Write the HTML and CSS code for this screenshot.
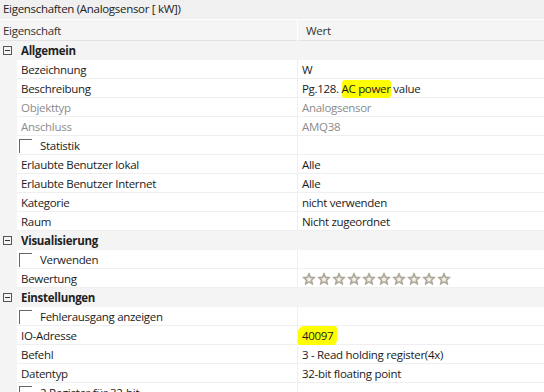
FILE: index.html
```html
<!DOCTYPE html>
<html lang="de">
<head>
  <meta charset="UTF-8" />
  <title>Eigenschaften</title>
  <link rel="stylesheet" href="styles.css">
</head>
<body>

  <div class="titlebar">Eigenschaften (Analogsensor [ kW])</div>

  <div class="header">
    <div class="h-name">Eigenschaft</div>
    <div class="h-value">Wert</div>
  </div>

  <div class="grid">
    <div class="group"><span class="toggle"></span><span class="group-name">Allgemein</span></div>
    <div class="row"><div class="name">Bezeichnung</div><div class="value">W</div></div>
    <div class="row"><div class="name">Beschreibung</div><div class="value">Pg.128. <span class="mark">AC power</span> value</div></div>
    <div class="row disabled"><div class="name">Objekttyp</div><div class="value">Analogsensor</div></div>
    <div class="row disabled"><div class="name">Anschluss</div><div class="value">AMQ38</div></div>
    <div class="row"><div class="name check"><span class="box"></span>Statistik</div><div class="value"></div></div>
    <div class="row"><div class="name">Erlaubte Benutzer lokal</div><div class="value">Alle</div></div>
    <div class="row"><div class="name">Erlaubte Benutzer Internet</div><div class="value">Alle</div></div>
    <div class="row"><div class="name">Kategorie</div><div class="value">nicht verwenden</div></div>
    <div class="row"><div class="name">Raum</div><div class="value">Nicht zugeordnet</div></div>

    <div class="group"><span class="toggle"></span><span class="group-name">Visualisierung</span></div>
    <div class="row"><div class="name check"><span class="box"></span>Verwenden</div><div class="value"></div></div>
    <div class="row"><div class="name">Bewertung</div><div class="value stars" id="stars"></div></div>

    <div class="group"><span class="toggle"></span><span class="group-name">Einstellungen</span></div>
    <div class="row"><div class="name check"><span class="box"></span>Fehlerausgang anzeigen</div><div class="value"></div></div>
    <div class="row"><div class="name">IO-Adresse</div><div class="value"><span class="mark num">40097</span></div></div>
    <div class="row"><div class="name">Befehl</div><div class="value">3 - Read holding register(4x)</div></div>
    <div class="row"><div class="name">Datentyp</div><div class="value">32-bit floating point</div></div>
    <div class="row"><div class="name check"><span class="box checked"></span>2 Register für 32-bit</div><div class="value"></div></div>
  </div>

  <script>
    // ten empty rating stars
    const stars = document.getElementById('stars');
    const star = '<svg class="star" width="14" height="14" viewBox="0 0 14 14">' +
      '<path d="M7 0.8 L8.8 4.9 L13.3 5.3 L9.9 8.2 L10.9 12.7 L7 10.3 L3.1 12.7 L4.1 8.2 L0.7 5.3 L5.2 4.9 Z" fill="#b3ab9b" stroke="#9c9585" stroke-width="0.6" stroke-linejoin="round"/>' +
      '<path d="M7 4.2 L7.9 6.3 L10.1 6.5 L8.4 7.9 L8.9 10 L7 8.9 L5.1 10 L5.6 7.9 L3.9 6.5 L6.1 6.3 Z" fill="#f4f2ee"/>' +
      '</svg>';
    for (let i = 0; i < 10; i++) {
      stars.innerHTML += star;
    }
  </script>
</body>
</html>
```

FILE: styles.css
```css
body {
  margin: 0;
  font-family: 'Open Sans', 'Noto Sans', sans-serif;
  font-size: 11.5px;
  letter-spacing: -0.3px;
  color: #1b1b1b;
  background: #f4f4f4;
  width: 544px;
  height: 392px;
  overflow: hidden;
}

.titlebar {
  height: 19px;
  line-height: 18px;
  padding-left: 3px;
  background: #f0f0f0;
  border-bottom: 1px solid #ffffff;
  color: #222;
}

.header {
  display: grid;
  grid-template-columns: 297px 1fr;
  height: 20px;
  line-height: 21px;
  background: #f5f5f5;
  border-bottom: 1px solid #e3e3e3;
  color: #333;
}
.h-name {
  padding-left: 3px;
}
.h-value {
  padding-left: 8px;
  border-left: 1px solid #ffffff;
}

.grid {
  display: flex;
  flex-direction: column;
}

.group {
  display: flex;
  align-items: center;
  height: 19px;
  background: #f4f4f4;
}
.toggle {
  position: relative;
  width: 9px;
  height: 9px;
  margin-left: 3px;
  margin-right: 9px;
  border: 1px solid #555;
  box-sizing: border-box;
}
.toggle::after {
  content: '';
  position: absolute;
  left: 1px;
  right: 1px;
  top: 3px;
  height: 1px;
  background: #333;
}
.group-name {
  font-weight: bold;
  color: #222;
}

.row {
  display: grid;
  grid-template-columns: 280px 1fr;
  margin-left: 17px;
  height: 19px;
  box-sizing: border-box;
  border-bottom: 1px solid #efefef;
  background: #ffffff;
  line-height: 19px;
}
.row .name {
  padding-left: 4px;
  white-space: nowrap;
}
.row .value {
  padding-left: 4px;
  border-left: 1px solid #efefef;
  white-space: nowrap;
}
.row.disabled {
  color: #8c8c8c;
}

.check {
  display: flex;
  align-items: flex-start;
}
.box {
  display: inline-block;
  width: 13px;
  height: 14px;
  margin-top: 3px;
  margin-left: -2px;
  margin-right: 8px;
  border-top: 1px solid #666;
  border-left: 1px solid #666;
  box-sizing: border-box;
  position: relative;
}
.box.checked::after {
  content: '';
  position: absolute;
  left: 3px;
  top: 4px;
  width: 3px;
  height: 6px;
  border-right: 1px solid #333;
  border-bottom: 1px solid #333;
  transform: rotate(40deg);
}

.mark {
  background: #ffff00;
  border-radius: 3px;
  padding: 1px 0 2px;
}
.mark.num {
  margin-left: -4px;
  padding: 2px 4px 3px 4px;
  border-radius: 6px 3px 6px 3px;
}

.stars {
  display: flex;
  align-items: center;
  gap: 1px;
  padding-left: 5px;
}
.star {
  display: block;
}
```
